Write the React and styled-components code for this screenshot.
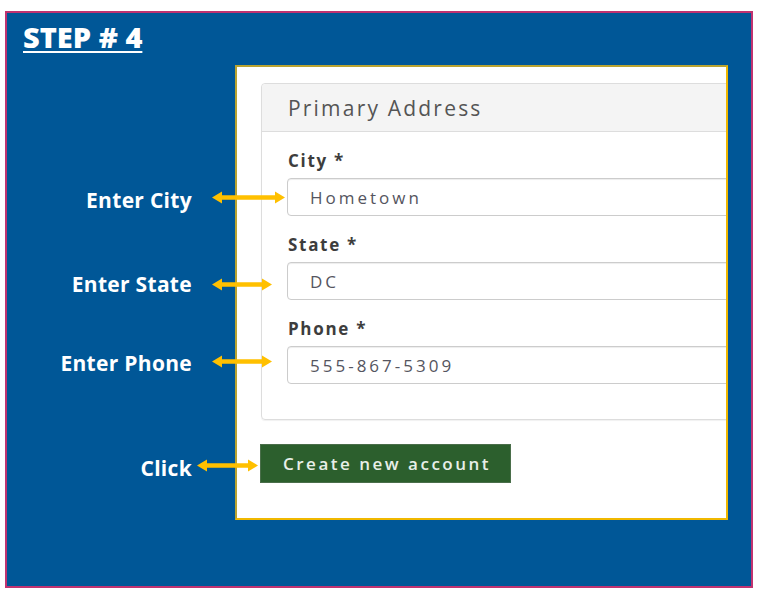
import styled, { createGlobalStyle } from "styled-components";

const GlobalStyle = createGlobalStyle`
  html, body {
    margin: 0;
    padding: 0;
    background: #ffffff;
  }
  body {
    font-family: "Open Sans", "Noto Sans", sans-serif;
  }
`;

const notes = [
  { text: "Enter City", top: 121, arrow: 73, gap: 20, lift: 3 },
  { text: "Enter State", top: 56, arrow: 60, gap: 20, lift: 0 },
  { text: "Enter Phone", top: 51, arrow: 60, gap: 20, lift: 2 },
  { text: "Click", top: 77, arrow: 61, gap: 5, lift: 3 },
];

const fields = [
  { label: "City *", value: "Hometown" },
  { label: "State *", value: "DC" },
  { label: "Phone *", value: "555-867-5309" },
];

function DoubleArrow({ width, gap, lift }) {
  const w = width;
  return (
    <ArrowSvg
      width={w}
      height="13"
      viewBox={`0 0 ${w} 13`}
      $gap={gap}
      $lift={lift}
    >
      <path
        d={`M0 6.5 L10 0.5 L10 4.2 L${w - 10} 4.2 L${w - 10} 0.5 L${w} 6.5 L${w - 10} 12.5 L${w - 10} 8.8 L10 8.8 L10 12.5 Z`}
        fill="#ffc000"
      />
    </ArrowSvg>
  );
}

export default function App() {
  return (
    <>
      <GlobalStyle />
      <Panel>
        <Heading>STEP # 4</Heading>
        <Body>
          <Notes>
            {notes.map((n) => (
              <NoteRow key={n.text} $top={n.top}>
                <NoteText>{n.text}</NoteText>
                <DoubleArrow width={n.arrow} gap={n.gap} lift={n.lift} />
              </NoteRow>
            ))}
          </Notes>
          <Shot>
            <AddressBox>
              <BoxHeader>Primary Address</BoxHeader>
              <BoxBody>
                {fields.map((f) => (
                  <Field key={f.label}>
                    <Label>{f.label}</Label>
                    <Input>{f.value}</Input>
                  </Field>
                ))}
              </BoxBody>
            </AddressBox>
            <Button>Create new account</Button>
          </Shot>
        </Body>
      </Panel>
    </>
  );
}

const Panel = styled.div`
  box-sizing: border-box;
  margin: 11px 0 0 5px;
  width: 748px;
  height: 577px;
  background: #005797;
  border: 2px solid #c03370;
  padding: 7px 0 0 16px;
`;

const Heading = styled.h1`
  margin: 0;
  font-family: "Open Sans", sans-serif;
  font-weight: 800;
  font-size: 29px;
  line-height: 34px;
  color: #ffffff;
  text-decoration: underline;
  text-decoration-thickness: 2px;
  text-underline-offset: 3px;
`;

const Body = styled.div`
  display: flex;
  margin-top: 11px;
  margin-left: -16px;
`;

const Notes = styled.div`
  width: 228px;
  flex-shrink: 0;
  display: flex;
  flex-direction: column;
`;

const NoteRow = styled.div`
  display: flex;
  align-items: center;
  margin-top: ${(p) => p.$top}px;
  height: 28px;
`;

const NoteText = styled.span`
  width: 185px;
  flex-shrink: 0;
  text-align: right;
  font-family: "Open Sans", sans-serif;
  font-weight: 700;
  font-size: 21px;
  line-height: 28px;
  letter-spacing: 0.3px;
  color: #ffffff;
`;

const ArrowSvg = styled.svg`
  flex-shrink: 0;
  position: relative;
  z-index: 2;
  margin-left: ${(p) => p.$gap}px;
  margin-bottom: ${(p) => p.$lift * 2}px;
`;

const Shot = styled.div`
  box-sizing: border-box;
  width: 493px;
  flex-shrink: 0;
  background: #ffffff;
  border: 2px solid;
  border-color: #b8a331 #f0b800 #f0b800 #b8a331;
  overflow: hidden;
  padding: 16px 0 35px 24px;
`;

const AddressBox = styled.div`
  width: 520px;
  border: 1px solid #dddddd;
  border-radius: 4px;
  box-shadow: 0 1px 1px rgba(0, 0, 0, 0.06);
`;

const BoxHeader = styled.div`
  height: 47px;
  display: flex;
  align-items: center;
  padding-left: 26px;
  background: #f4f4f4;
  border-bottom: 1px solid #dddddd;
  border-radius: 4px 4px 0 0;
  font-size: 21px;
  font-weight: 500;
  letter-spacing: 2.2px;
  color: #555555;
`;

const BoxBody = styled.div`
  padding: 0 0 35px 26px;
`;

const Field = styled.div`
  display: flex;
  flex-direction: column;
  padding-top: 19px;
`;

const Label = styled.label`
  font-weight: 700;
  font-size: 17px;
  line-height: 20px;
  letter-spacing: 1.7px;
  color: #3d3d3d;
  margin-bottom: 7px;
`;

const Input = styled.div`
  box-sizing: border-box;
  height: 38px;
  margin-left: -1px;
  display: flex;
  align-items: center;
  padding-left: 22px;
  border: 1px solid #cccccc;
  border-radius: 4px;
  box-shadow: inset 0 1px 1px rgba(0, 0, 0, 0.075);
  font-size: 17px;
  font-weight: 500;
  letter-spacing: 3px;
  color: #555560;
`;

const Button = styled.button`
  display: block;
  box-sizing: border-box;
  margin: 24px 0 0 -1px;
  width: 251px;
  height: 39px;
  padding: 0 0 0 22px;
  text-align: left;
  background: #2c5f2d;
  border: 1px solid #4a6e4a;
  border-radius: 0;
  font-family: "Open Sans", sans-serif;
  font-weight: 600;
  font-size: 17px;
  letter-spacing: 2.5px;
  color: #e8efe8;
  cursor: pointer;
`;
